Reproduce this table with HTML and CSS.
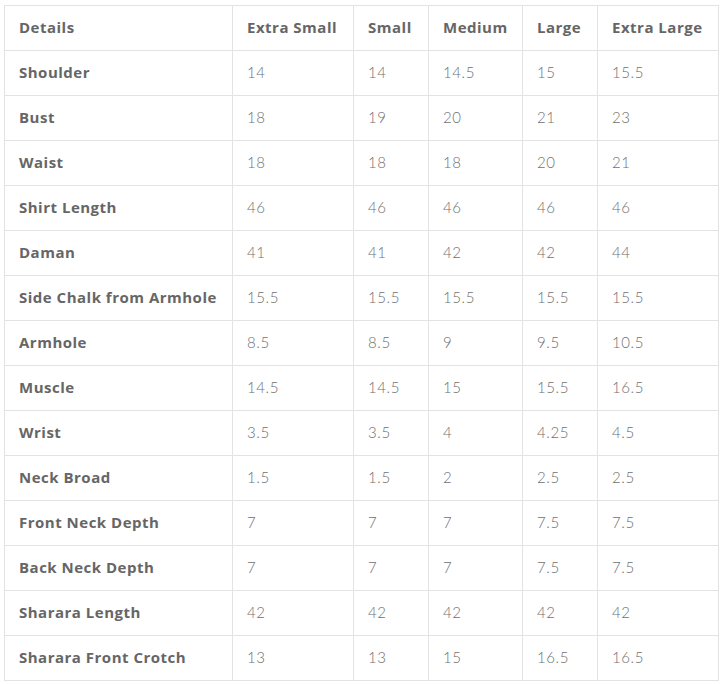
FILE: index.html
```html
<!DOCTYPE html>
<html>
<head>
<meta charset="utf-8">
<link rel="stylesheet" href="styles.css">
</head>
<body>
<table class="size-table">
  <colgroup>
    <col class="c1"><col class="c2"><col class="c3"><col class="c4"><col class="c5"><col class="c6">
  </colgroup>
  <thead>
    <tr><th>Details</th><th>Extra Small</th><th>Small</th><th>Medium</th><th>Large</th><th>Extra Large</th></tr>
  </thead>
  <tbody>
    <tr><th>Shoulder</th><td>14</td><td>14</td><td>14.5</td><td>15</td><td>15.5</td></tr>
    <tr><th>Bust</th><td>18</td><td>19</td><td>20</td><td>21</td><td>23</td></tr>
    <tr><th>Waist</th><td>18</td><td>18</td><td>18</td><td>20</td><td>21</td></tr>
    <tr><th>Shirt Length</th><td>46</td><td>46</td><td>46</td><td>46</td><td>46</td></tr>
    <tr><th>Daman</th><td>41</td><td>41</td><td>42</td><td>42</td><td>44</td></tr>
    <tr><th>Side Chalk from Armhole</th><td>15.5</td><td>15.5</td><td>15.5</td><td>15.5</td><td>15.5</td></tr>
    <tr><th>Armhole</th><td>8.5</td><td>8.5</td><td>9</td><td>9.5</td><td>10.5</td></tr>
    <tr><th>Muscle</th><td>14.5</td><td>14.5</td><td>15</td><td>15.5</td><td>16.5</td></tr>
    <tr><th>Wrist</th><td>3.5</td><td>3.5</td><td>4</td><td>4.25</td><td>4.5</td></tr>
    <tr><th>Neck Broad</th><td>1.5</td><td>1.5</td><td>2</td><td>2.5</td><td>2.5</td></tr>
    <tr><th>Front Neck Depth</th><td>7</td><td>7</td><td>7</td><td>7.5</td><td>7.5</td></tr>
    <tr><th>Back Neck Depth</th><td>7</td><td>7</td><td>7</td><td>7.5</td><td>7.5</td></tr>
    <tr><th>Sharara Length</th><td>42</td><td>42</td><td>42</td><td>42</td><td>42</td></tr>
    <tr><th>Sharara Front Crotch</th><td>13</td><td>13</td><td>15</td><td>16.5</td><td>16.5</td></tr>
  </tbody>
</table>
</body>
</html>
```
FILE: styles.css
```css
html, body {
  margin: 0;
  padding: 0;
  background: #ffffff;
}
body {
  padding: 5px 0 0 4px;
  font-family: "Open Sans", "Lato", sans-serif;
}
.size-table {
  border-collapse: collapse;
  table-layout: fixed;
  width: 714px;
}
.c1 { width: 228px; }
.c2 { width: 121px; }
.c3 { width: 75px; }
.c4 { width: 94px; }
.c5 { width: 75px; }
.c6 { width: 121px; }
.size-table th,
.size-table td {
  border: 1px solid #e3e3e3;
  height: 45px;
  padding: 0 0 3px 14px;
  text-align: left;
  vertical-align: middle;
  box-sizing: border-box;
}
.size-table th {
  font-family: "Open Sans", "Lato", sans-serif;
  font-size: 15px;
  font-weight: 700;
  color: #666666;
  letter-spacing: 0.5px;
}
.size-table td {
  font-family: "Lato", "Open Sans", sans-serif;
  font-size: 15px;
  font-weight: 300;
  color: #707070;
  letter-spacing: 0.6px;
  padding-bottom: 2px;
}
```
